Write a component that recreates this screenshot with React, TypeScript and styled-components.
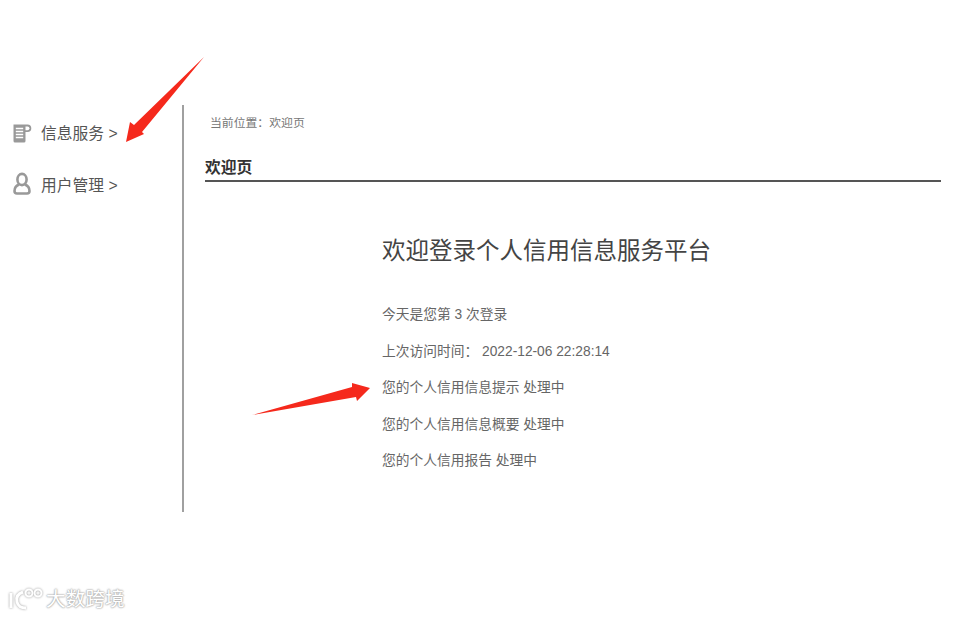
import React from "react";
import styled, { createGlobalStyle } from "styled-components";

const Global = createGlobalStyle`
  html, body { margin: 0; padding: 0; background: #fff; }
  body { font-family: "Liberation Sans", "Noto Sans CJK SC", sans-serif; }
`;
const Page = styled.div`
  position: relative; width: 955px; height: 617px; overflow: hidden; background: #fff;
  padding-top: 105px; box-sizing: border-box;
`;
const Layout = styled.div`display: flex; height: 407px;`;
const Sidebar = styled.nav`
  width: 184px; flex: none; border-right: 2px solid #a0a0a0;
  padding-top: 2px; box-sizing: border-box;
`;
const NavItem = styled.div`
  display: flex; align-items: center; height: 51.5px; padding-left: 12px; gap: 9px;
  font-size: 15.75px; color: #555;
`;
const IconSlot = styled.span`display: flex; width: 20px; height: 24px; align-items: center; justify-content: center;`;
const Main = styled.main`flex: 1; padding: 0 14px 0 21px; min-width: 0;`;
const Crumb = styled.div`font-size: 11.85px; color: #777; padding: 11px 0 0 5px; line-height: 14px;`;
const PageTitle = styled.h2`
  margin: 26px 0 0; font-size: 15.75px; font-weight: 700; color: #333; line-height: 24px; height: 24px;
  border-bottom: 2px solid #555;
`;
const Content = styled.section`padding: 53px 0 0 177px;`;
const Heading = styled.h1`margin: 0 0 38px; font-size: 23.5px; font-weight: 400; color: #444; line-height: 32px;`;
const Line = styled.p`margin: 0; font-size: 13.75px; line-height: 20px; height: 36.5px; color: #666;`;
const Arrow = styled.svg`position: absolute; left: 0; top: 0; pointer-events: none;`;
const Watermark = styled.div`
  position: absolute; left: 8px; top: 586px; display: flex; align-items: center; gap: 2px;
  font-size: 19.7px; line-height: 26px; color: #fff;
  text-shadow: 0 0 2px #aaa, 0 0 2px #aaa, 0 0 1px #bbb;
`;
const Logo = styled.svg`filter: drop-shadow(0 0 1px #999);`;

export default function App() {
  return (
    <Page>
      <Global />
      <Layout>
        <Sidebar>
          <NavItem>
            <IconSlot>
              <svg width="20" height="20" viewBox="0 0 20 20">
                <path d="M1.500 1.500H15.500a3.800 3.800 0 0 1 0 7.600H13.500V18a1.500 1.500 0 0 1-1.500 1.500H3a1.500 1.500 0 0 1-1.500-1.500Z" fill="#999" />
                <path d="M3.800 5.500h7.400M3.800 8.500h7.400M3.800 11.500h7.400M3.800 14.500h7.400" stroke="#fff" strokeWidth="1.300" />
                <path d="M13.500 3.400h2a1.900 1.900 0 0 1 0 3.800h-2Z" fill="#fff" />
              </svg>
            </IconSlot>
            信息服务 &gt;
          </NavItem>
          <NavItem>
            <IconSlot>
              <svg width="20" height="24" viewBox="0 0 20 24" fill="none" stroke="#999" strokeWidth="2.600">
                <ellipse cx="10" cy="7.500" rx="4.600" ry="5.600" />
                <path d="M7 12.500C3.500 14 2.500 16 2.500 19c0 1.500 1 2.500 2.500 2.500h10c1.500 0 2.500-1 2.500-2.500 0-3-1-5-4.500-6.500" />
              </svg>
            </IconSlot>
            用户管理 &gt;
          </NavItem>
        </Sidebar>
        <Main>
          <Crumb>当前位置：欢迎页</Crumb>
          <PageTitle>欢迎页</PageTitle>
          <Content>
            <Heading>欢迎登录个人信用信息服务平台</Heading>
            <Line>今天是您第 3 次登录</Line>
            <Line>上次访问时间： 2022-12-06 22:28:14</Line>
            <Line>您的个人信用信息提示 处理中</Line>
            <Line>您的个人信用信息概要 处理中</Line>
            <Line>您的个人信用报告 处理中</Line>
          </Content>
        </Main>
      </Layout>
      <Arrow width="955" height="617" viewBox="0 0 955 617">
        <polygon points="204,57 142,132 144,134 126,142 130,122 134,125" fill="#f5291c" />
        <polygon points="252,415 352,387 352,383 370,388 357,401 356,397" fill="#f5291c" />
      </Arrow>
      <Watermark>
        <Logo width="36" height="26" viewBox="0 0 36 26" fill="none" stroke="#fff" strokeWidth="3">
          <path d="M3 7v15M15 6C9 8 8 12 9 16s4 6 9 6" />
          <circle cx="21" cy="7" r="3.500" strokeWidth="2" />
          <circle cx="30" cy="7" r="3.500" strokeWidth="2" />
        </Logo>
        大数跨境
      </Watermark>
    </Page>
  );
}
